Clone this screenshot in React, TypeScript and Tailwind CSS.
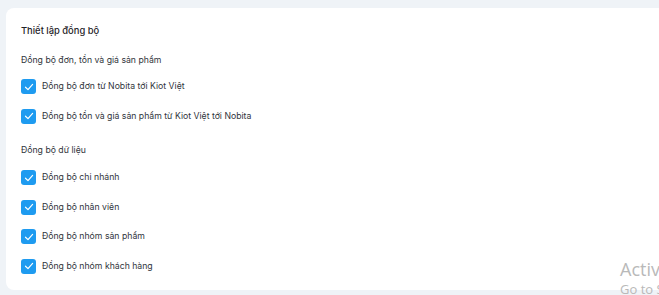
import React from "react";

const CheckRow = ({ label }: { label: string }) => (
  <div className="flex items-center h-[29.5px] gap-[6px]">
    <span className="w-[15px] h-[15px] rounded-[3px] bg-[#1e9bf0] flex items-center justify-center">
      <svg width="10" height="10" viewBox="0 0 10 10" fill="none">
        <path d="M1.5 5.2 L4 7.6 L8.6 2.4" stroke="white" strokeWidth="1.2" strokeLinecap="round" strokeLinejoin="round" />
      </svg>
    </span>
    <span className="text-[8.7px] text-[#30343b]">{label}</span>
  </div>
);

const App = () => {
  return (
    <div
      className="relative w-[659px] h-[295px] overflow-hidden bg-[#eff3f7] pt-[8px] pl-[6px]"
      style={{ fontFamily: "Inter, 'Noto Sans', sans-serif" }}
    >
      <div className="w-[700px] h-[282px] bg-white rounded-[8px] pl-[15px] pt-[14px]">
        <h2 className="text-[9.4px] leading-[18px] font-medium text-[#1f2329]">Thiết lập đồng bộ</h2>
        <p className="mt-[12px] text-[8.7px] leading-[16px] text-[#30343b]">Đồng bộ đơn, tồn và giá sản phẩm</p>
        <div className="mt-[4px]">
          <CheckRow label="Đồng bộ đơn từ Nobita tới Kiot Việt" />
          <CheckRow label="Đồng bộ tồn và giá sản phẩm từ Kiot Việt tới Nobita" />
        </div>
        <p className="mt-[11px] text-[8.7px] leading-[16px] text-[#30343b]">Đồng bộ dữ liệu</p>
        <div className="mt-[5px]">
          <CheckRow label="Đồng bộ chi nhánh" />
          <CheckRow label="Đồng bộ nhân viên" />
          <CheckRow label="Đồng bộ nhóm sản phẩm" />
          <CheckRow label="Đồng bộ nhóm khách hàng" />
        </div>
      </div>
      <div
        className="absolute left-[620px] top-[257px] text-[#b9b9b9] whitespace-nowrap"
        style={{ fontFamily: "'Open Sans', 'Liberation Sans', sans-serif" }}
      >
        <div className="text-[18px] leading-[24px]">Activate Windows</div>
        <div className="text-[13px] leading-[16px]">Go to Settings</div>
      </div>
    </div>
  );
};

export default App;
